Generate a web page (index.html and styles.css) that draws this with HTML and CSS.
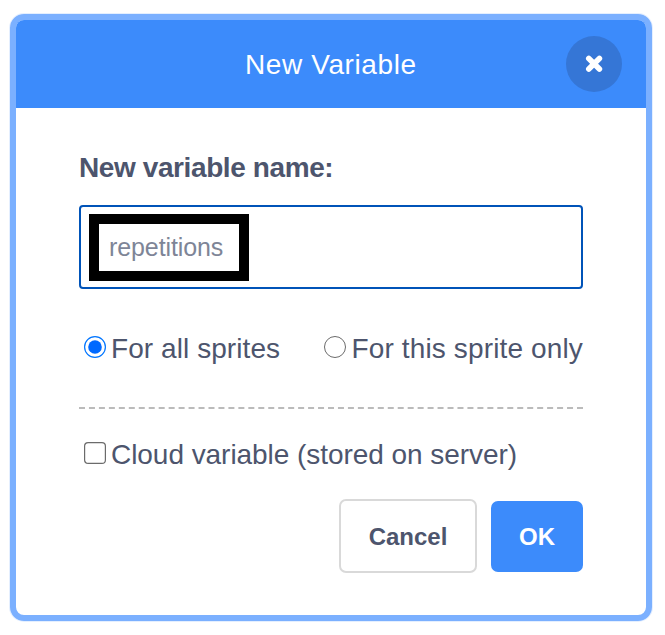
FILE: index.html
```html
<!DOCTYPE html>
<html lang="en">
<head>
<meta charset="utf-8">
<title>New Variable</title>
<link rel="stylesheet" href="styles.css">
</head>
<body>
<div class="modal">
  <header class="header">
    <span class="title">New Variable</span>
    <button class="close" aria-label="Close">
      <svg width="18" height="18" viewBox="0 0 18 18"><path d="M3.8 3.4 14.4 14M14.4 3.4 3.8 14" stroke="#fff" stroke-width="5.6" stroke-linecap="round"/></svg>
    </button>
  </header>
  <div class="body">
    <div class="label"><span class="label-text">New variable name:</span></div>
    <div class="field"><div class="highlight"><span class="value">repetitions</span></div></div>
    <div class="options">
      <label class="option">
        <svg class="control" width="22" height="22" viewBox="0 0 22 22"><circle cx="11" cy="11" r="10.4" fill="#fff" stroke="#0075ff" stroke-width="1.2"/><circle cx="11" cy="11" r="6.8" fill="#0069ff"/></svg>
        <span class="text t-all">For all sprites</span>
      </label>
      <label class="option">
        <svg class="control" width="22" height="22" viewBox="0 0 22 22"><circle cx="11" cy="11" r="10.5" fill="#fff" stroke="#6b6b6b"/></svg>
        <span class="text t-this">For this sprite only</span>
      </label>
    </div>
    <div class="cloud">
      <label class="option">
        <svg class="control" width="22" height="22" viewBox="0 0 22 22"><rect x=".6" y=".6" width="20.8" height="20.8" rx="3.5" fill="#fff" stroke="#6b6b6b" stroke-width="1.2"/></svg>
        <span class="text t-cloud">Cloud variable (stored on server)</span>
      </label>
    </div>
    <div class="buttons">
      <button class="btn cancel">Cancel</button>
      <button class="btn ok">OK</button>
    </div>
  </div>
</div>
</body>
</html>
```
FILE: styles.css
```css
* { box-sizing: border-box; }
body {
  margin: 0;
  padding: 14px 13px 14px 10px;
  background: #fff;
  color: #4d556d;
  font-family: "Liberation Sans", Arial, sans-serif;
  font-size: 28px;
  line-height: 32px;
}
button { font: inherit; padding: 0; border: 0; }
span { white-space: nowrap; }
svg { display: block; fill: none; }
.modal {
  height: 607px;
  border: 6px solid #7bb0ff;
  border-radius: 14px;
  overflow: hidden;
  box-shadow: 0 0 0 1px #e4efff;
}
.header {
  height: 88px;
  padding: 0 24.5px 0 229px;
  display: flex;
  align-items: center;
  justify-content: space-between;
  background: #3c8bfb;
  color: #fff;
}
.title { letter-spacing: .6px; padding-top: 2px; }
.close {
  width: 56px;
  height: 56px;
  border-radius: 50%;
  margin-bottom: 1px;
  display: grid;
  place-items: center;
  background: #3576d6;
}
.body { padding: 43px 63px 0; }
.label {
  height: 54px;
  padding-top: 1px;
  font-weight: bold;
  letter-spacing: -.4px;
}
.field {
  height: 84px;
  padding: 7px 8px;
  border: 2px solid #0053b8;
  border-radius: 4px;
}
.highlight {
  width: 160px;
  height: 67px;
  padding: 0 0 2px 10px;
  border: 10px solid #000;
  display: flex;
  align-items: center;
  color: #7e8597;
  font-size: 25px;
  letter-spacing: -.1px;
}
.options {
  display: flex;
  justify-content: space-between;
  padding: 43px 0 42px 5px;
}
.option {
  display: flex;
  gap: 5px;
}
.control { margin-top: 4px; }
.text { padding-top: 1px; }
.t-all { letter-spacing: .07px; }
.t-this { letter-spacing: .14px; }
.t-cloud { letter-spacing: -.05px; }
.cloud {
  border-top: 2px dashed #bbb;
  padding: 29px 0 0 5px;
}
.buttons {
  display: flex;
  justify-content: flex-end;
  align-items: center;
  gap: 14px;
  margin-top: 28px;
}
.btn {
  height: 71px;
  padding-top: 2px;
  border-radius: 7px;
  font-size: 24px;
  font-weight: bold;
}
.cancel {
  width: 138px;
  height: 74px;
  border: 2px solid #d9d9d9;
  background: #fff;
  color: #4d556d;
}
.ok { width: 92px; background: #3c8bfb; color: #fff; }
```
